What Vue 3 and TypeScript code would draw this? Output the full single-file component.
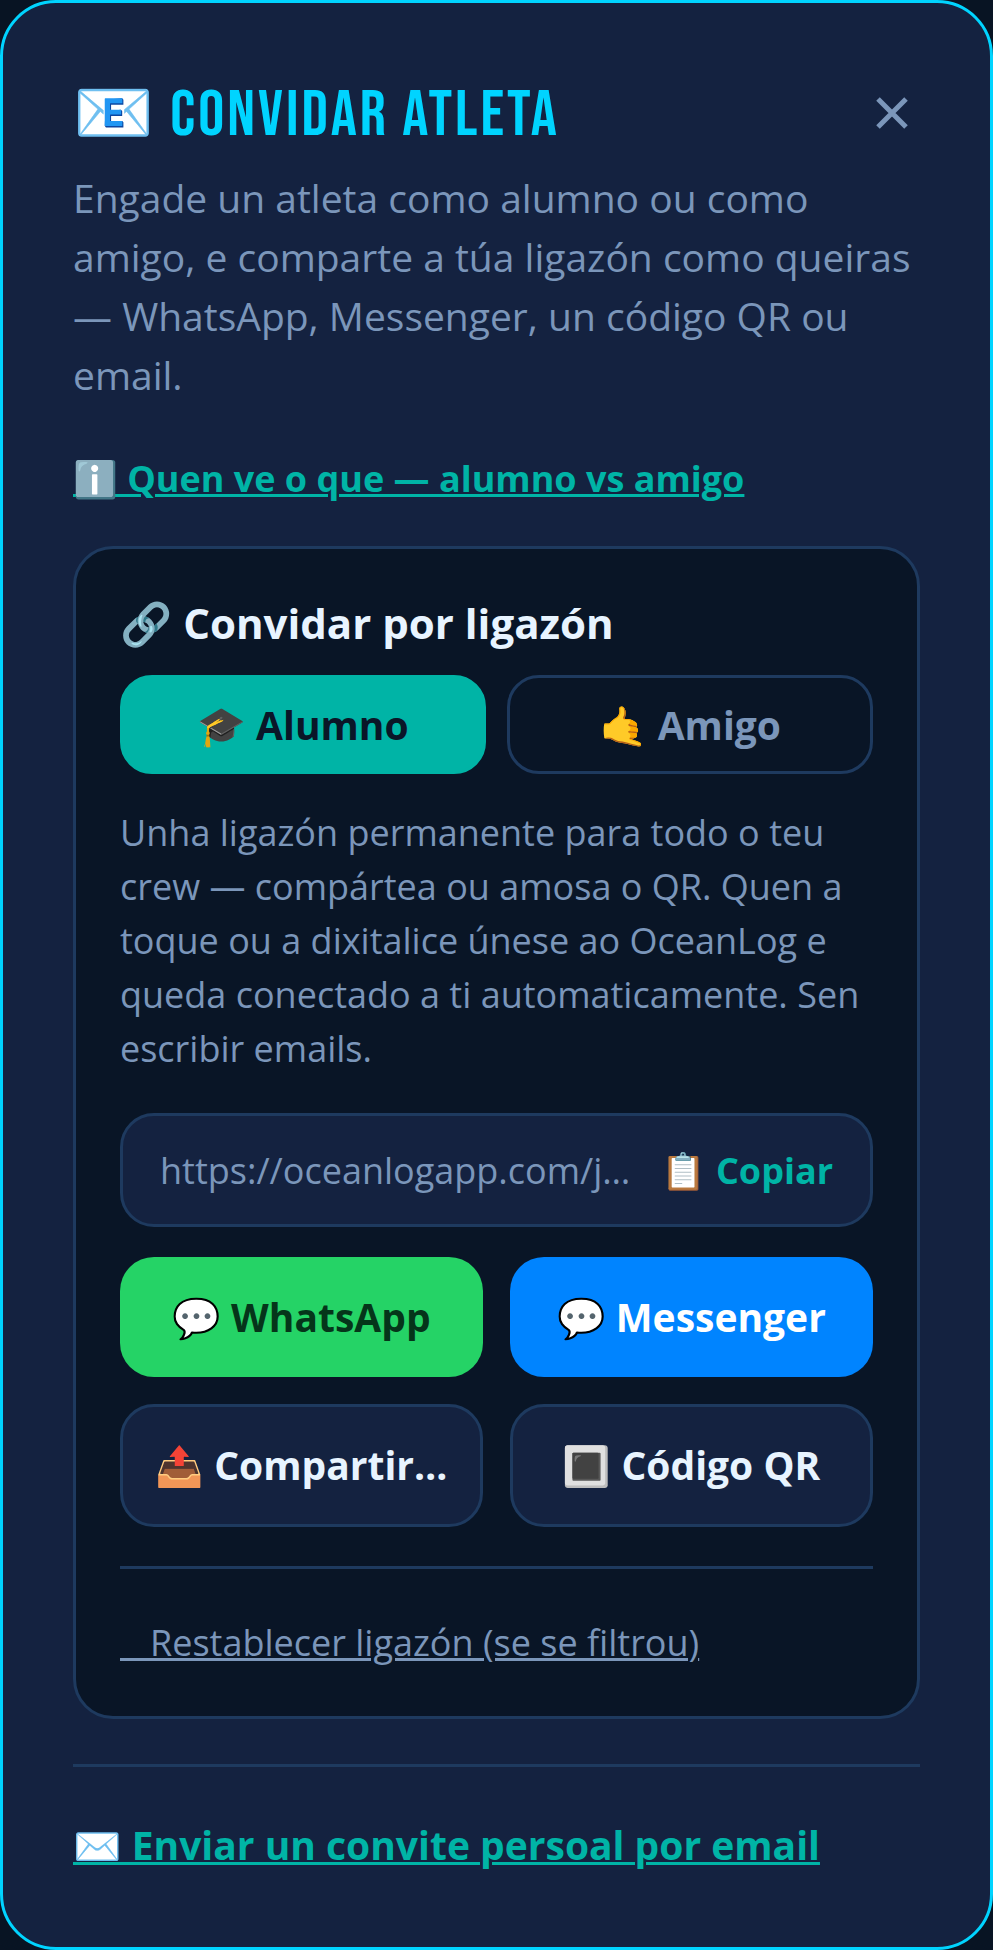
<script setup lang="ts">
import { ref } from 'vue'

type Role = 'alumno' | 'amigo'

const role = ref<Role>('alumno')
const roles: { id: Role; icon: string; label: string }[] = [
  { id: 'alumno', icon: '🎓', label: 'Alumno' },
  { id: 'amigo', icon: '🤙', label: 'Amigo' },
]
const channels = [
  { id: 'whatsapp', icon: '💬', label: 'WhatsApp' },
  { id: 'messenger', icon: '💬', label: 'Messenger' },
  { id: 'share', icon: '📤', label: 'Compartir…' },
  { id: 'qr', icon: '🔳', label: 'Código QR' },
]
</script>

<template>
  <main class="dialog" role="dialog" aria-labelledby="dialog-title">
    <header class="head">
      <h1 id="dialog-title">📧 CONVIDAR ATLETA</h1>
      <button class="close" type="button" aria-label="Pechar">
        <svg viewBox="0 0 32 32" aria-hidden="true"><path d="M2 2 30 30M30 2 2 30" /></svg>
      </button>
    </header>
    <p class="intro">
      Engade un atleta como alumno ou como amigo, e comparte a túa ligazón como queiras — WhatsApp,
      Messenger, un código QR ou email.
    </p>
    <a class="info" href="#">ℹ️ Quen ve o que — alumno vs amigo</a>

    <section class="panel">
      <h2>🔗 Convidar por ligazón</h2>
      <div class="roles">
        <button
          v-for="r in roles"
          :key="r.id"
          type="button"
          class="role"
          :class="{ active: role === r.id }"
          :aria-pressed="role === r.id"
          @click="role = r.id"
        >{{ r.icon }} {{ r.label }}</button>
      </div>
      <p class="desc">
        Unha ligazón permanente para todo o teu crew — compártea ou amosa o QR. Quen a toque ou a
        dixitalice únese ao OceanLog e queda conectado a ti automaticamente. Sen escribir emails.
      </p>
      <div class="link-row">
        <span class="url">https://oceanlogapp.com/j…</span>
        <button class="copy" type="button">📋 Copiar</button>
      </div>
      <div class="channels">
        <button v-for="c in channels" :key="c.id" type="button" class="channel" :class="c.id">{{ c.icon }} {{ c.label }}</button>
      </div>
      <div class="reset">
        <a href="#">&ensp;&emsp13;Restablecer ligazón (se se filtrou)</a>
      </div>
    </section>

    <footer class="foot">
      <a href="#">✉️ Enviar un convite persoal por email</a>
    </footer>
  </main>
</template>

<style>
body {
  background: #081423;
}
</style>

<style scoped>
* {
  box-sizing: border-box;
}
.dialog {
  font-family: 'Open Sans', 'Noto Sans', 'Noto Color Emoji', sans-serif;
  color: #e8f4ff;
  background: #142240;
  border: 3px solid #00d4ff;
  border-radius: 56px;
  padding: 70px;
  min-height: 100vh;
}
button {
  font-family: inherit;
  cursor: pointer;
}
.head {
  display: flex;
  align-items: center;
  justify-content: space-between;
  height: 80px;
}
h1 {
  margin: 0;
  padding-top: 6px;
  font-family: 'Bebas Neue', 'Roboto', 'Noto Color Emoji', sans-serif;
  font-size: 65px;
  font-weight: 400;
  line-height: 80px;
  letter-spacing: 3px;
  color: #00d4ff;
}
.close {
  width: 56px;
  height: 56px;
  padding: 12px;
  border: 0;
  background: none;
  color: #7b96ba;
}
.close svg {
  display: block;
  width: 32px;
  height: 32px;
}
.close path {
  stroke: currentColor;
  stroke-width: 5;
  fill: none;
}
.intro {
  margin: 15px 0 0;
  font-size: 39px;
  line-height: 59px;
  color: #7b96ba;
}
a {
  text-decoration-thickness: 3px;
}
.info {
  display: block;
  width: fit-content;
  margin-top: 50px;
  font-size: 36px;
  font-weight: 700;
  line-height: 50px;
  color: #00b4a6;
}
.panel {
  margin-top: 42px;
  padding: 44px 44px 47px;
  border: 3px solid #1e3a5f;
  border-radius: 40px;
  background: #091526;
}
h2 {
  margin: 0;
  font-size: 42px;
  font-weight: 700;
  line-height: 60px;
}
.roles {
  display: grid;
  grid-template-columns: 1fr 1fr;
  gap: 21px;
  margin-top: 22px;
}
.role {
  height: 99px;
  border: 3px solid #1e3a5f;
  border-radius: 32px;
  background: none;
  color: #7b96ba;
  font-size: 39px;
  font-weight: 700;
}
.role.active {
  background: #00b4a6;
  border-color: #00b4a6;
  color: #0a1628;
}
.desc {
  margin: 32px 0 0;
  font-size: 36px;
  line-height: 54px;
  color: #7b96ba;
}
.link-row {
  display: flex;
  align-items: center;
  justify-content: space-between;
  gap: 24px;
  height: 114px;
  margin-top: 37px;
  padding: 0 37px;
  border: 3px solid #1e3a5f;
  border-radius: 34px;
  background: #142240;
}
.url {
  white-space: nowrap;
  font-size: 36px;
  color: #7b96ba;
}
.copy {
  padding: 0;
  border: 0;
  background: none;
  color: #00b4a6;
  font-size: 36px;
  font-weight: 700;
  white-space: nowrap;
}
.channels {
  display: grid;
  grid-template-columns: 1fr 1fr;
  gap: 27px;
  margin-top: 30px;
}
.channel {
  height: 120px;
  padding: 0 0 2px;
  border: 0;
  border-radius: 34px;
  font-size: 39px;
  font-weight: 700;
  color: #e8f4ff;
}
.whatsapp {
  background: #25d366;
  color: #05351a;
}
.messenger {
  background: #0084ff;
  color: #ffffff;
}
.share,
.qr {
  height: 123px;
  background: #142240;
  border: 3px solid #1e3a5f;
}
.reset {
  margin-top: 39px;
  padding-top: 47px;
  border-top: 3px solid #1e3a5f;
  font-size: 36px;
  line-height: 53px;
}
.reset a {
  color: #7b96ba;
}
.foot {
  margin-top: 45px;
  padding-top: 49px;
  border-top: 3px solid #1e3a5f;
  font-size: 39px;
  font-weight: 700;
  line-height: 58px;
}
.foot a {
  color: #00b4a6;
}
</style>
